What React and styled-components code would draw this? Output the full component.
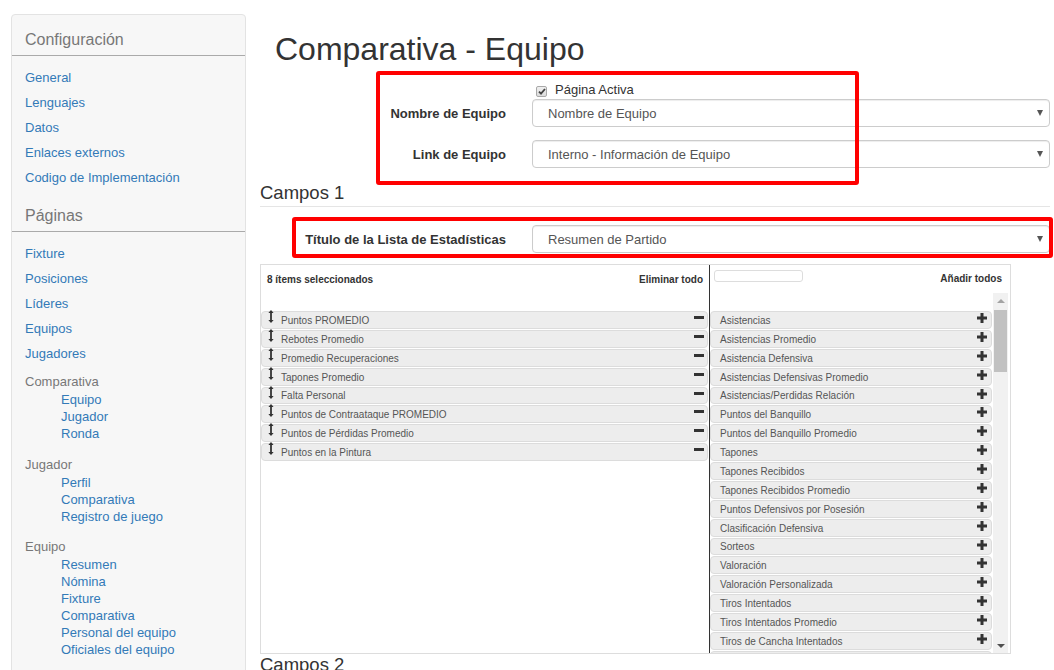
import React from "react";
import styled, { createGlobalStyle } from "styled-components";

const Global = createGlobalStyle`
  html, body { margin: 0; padding: 0; background: #fff; overflow: hidden; }
  body { font-family: "Liberation Sans", Arial, sans-serif; color: #333; }
  * { box-sizing: border-box; }
`;

const Page = styled.div`
  display: grid;
  grid-template-columns: 235px 790px;
  column-gap: 14px;
  padding-left: 11px;
  width: 1054px;
  height: 670px;
  overflow: hidden;
`;

/* ---------- Sidebar ---------- */
const Sidebar = styled.nav`
  margin-top: 14px;
  min-height: 720px;
  background: #f7f7f7;
  border: 1px solid #e3e3e3;
  border-radius: 4px;
`;

const SideHeading = styled.div`
  margin-top: ${(p) => p.$mt}px;
  padding: 1px 13px 5px;
  font-size: 16px;
  line-height: 20px;
  color: #777;
  border-bottom: 1px solid #aaa;
`;

const LinkList = styled.div`
  padding: 9px 13px 0;
`;

const SideLink = styled.a`
  display: block;
  font-size: 13px;
  line-height: 25px;
  color: #337ab7;
  text-decoration: none;
`;

const Group = styled.div`
  margin-top: ${(p) => p.$mt}px;
`;

const GroupTitle = styled.div`
  font-size: 13px;
  line-height: 18px;
  color: #777;
`;

const SubLink = styled.a`
  display: block;
  padding-left: 36px;
  font-size: 13px;
  line-height: 17px;
  color: #337ab7;
  text-decoration: none;
`;

/* ---------- Main ---------- */
const Main = styled.main`
  position: relative;
`;

const Title = styled.h1`
  margin: 0;
  padding: 31px 0 0 15px;
  font-size: 32px;
  line-height: 36px;
  font-weight: 400;
  color: #333;
`;

const FormGrid = styled.div`
  display: grid;
  grid-template-columns: 246px 518px;
  column-gap: 26px;
  align-items: center;
  margin-top: ${(p) => p.$mt || 0}px;
`;

const Label = styled.label`
  text-align: right;
  font-size: 13px;
  font-weight: 700;
  color: #333;
`;

const CheckRow = styled.div`
  grid-column: 2;
  display: flex;
  align-items: center;
  height: 18px;
  padding-left: 4px;
  font-size: 13px;
  color: #333;
`;

const CheckBox = styled.span`
  width: 11px;
  height: 11px;
  margin-top: 4px;
  margin-right: 8px;
  border: 1px solid #a9a9a9;
  border-radius: 2px;
  background: linear-gradient(#f0f0f0, #dcdcdc);
  display: flex;
  align-items: center;
  justify-content: center;
`;

const SelectBox = styled.div`
  height: 28px;
  display: flex;
  align-items: center;
  justify-content: space-between;
  padding: 0 6px 0 15px;
  border: 1px solid #ccc;
  border-radius: 4px;
  background: #fff;
  box-shadow: inset 0 1px 1px rgba(0, 0, 0, 0.075);
  font-size: 13px;
  color: #555;
`;

const Caret = styled.span`
  width: 0;
  height: 0;
  border-left: 3.5px solid transparent;
  border-right: 3.5px solid transparent;
  border-top: 6px solid #555;
`;

const SectionTitle = styled.h3`
  margin: ${(p) => p.$mt}px 0 0;
  padding-bottom: 2px;
  font-size: 18.5px;
  line-height: 22px;
  font-weight: 400;
  color: #333;
  border-bottom: ${(p) => (p.$line ? "1px solid #e5e5e5" : "none")};
`;

const RedBox = styled.div`
  position: absolute;
  border: 4px solid #ff0000;
  border-radius: 3px;
  pointer-events: none;
`;

/* ---------- Multiselect ---------- */
const Multi = styled.div`
  margin-top: 11px;
  width: 751px;
  height: 390px;
  border: 1px solid #ddd;
  display: grid;
  grid-template-columns: 448px 1px 300px;
  grid-template-rows: minmax(0, 1fr);
  overflow: hidden;
  font-size: 10px;
`;

const Divider = styled.div`
  background: #333;
`;

const Panel = styled.div`
  display: flex;
  flex-direction: column;
  min-width: 0;
  min-height: 0;
  overflow: hidden;
`;

const PanelHead = styled.div`
  flex: none;
  height: 28px;
  display: flex;
  align-items: ${(p) => (p.$top ? "flex-start" : "center")};
  justify-content: space-between;
  padding: ${(p) => p.$pad};
  font-weight: 700;
  color: #333;
`;

const Search = styled.input`
  width: 89px;
  height: 12px;
  margin-top: 5px;
  border: 1px solid #ddd;
  border-radius: 3px;
  padding: 0;
  outline: none;
`;

const HeadText = styled.span`
  margin-top: ${(p) => p.$mt || 0}px;
`;

const PanelBody = styled.div`
  flex: 1;
  display: flex;
  min-height: 0;
  overflow: hidden;
`;

const List = styled.div`
  flex: ${(p) => (p.$w ? `0 0 ${p.$w}px` : "1")};
  padding: 18px ${(p) => p.$pr || 0}px 0 0;
  overflow: hidden;
`;

const Row = styled.div`
  height: 17.88px;
  margin-bottom: 1px;
  display: flex;
  align-items: center;
  border: 1px solid #dcdcdc;
  border-radius: 4px;
  background: #ededed;
  padding-left: ${(p) => p.$pl}px;
  color: #555;
  font-size: 10px;
  white-space: nowrap;
`;

const RowText = styled.span`
  flex: 1;
  padding-top: 2px;
  line-height: 16px;
`;

const SortIcon = styled.svg`
  align-self: flex-start;
  margin-top: -2px;
  margin-right: 7px;
  flex: none;
`;

const ActIcon = styled.svg`
  align-self: flex-start;
  margin-top: ${(p) => p.$mt}px;
  margin-right: ${(p) => p.$mr}px;
  flex: none;
`;

const ScrollBar = styled.div`
  flex: 0 0 15px;
  margin-left: 1px;
  background: #f1f1f1;
  display: flex;
  flex-direction: column;
  align-items: center;
`;

const ScrollBtn = styled.div`
  height: 15px;
  width: 15px;
  flex: none;
  display: flex;
  align-items: center;
  justify-content: center;
`;

const Arrow = styled.span`
  width: 0;
  height: 0;
  border-left: 4px solid transparent;
  border-right: 4px solid transparent;
  ${(p) => (p.$up ? "border-bottom: 4px solid #a3a3a3;" : "border-top: 4px solid #505050;")}
`;

const Track = styled.div`
  flex: 1;
  width: 15px;
  padding: 2px 1px 0;
`;

const Thumb = styled.div`
  height: 62px;
  background: #c1c1c1;
`;

const selected = [
  "Puntos PROMEDIO",
  "Rebotes Promedio",
  "Promedio Recuperaciones",
  "Tapones Promedio",
  "Falta Personal",
  "Puntos de Contraataque PROMEDIO",
  "Puntos de Pérdidas Promedio",
  "Puntos en la Pintura",
];

const available = [
  "Asistencias",
  "Asistencias Promedio",
  "Asistencia Defensiva",
  "Asistencias Defensivas Promedio",
  "Asistencias/Perdidas Relación",
  "Puntos del Banquillo",
  "Puntos del Banquillo Promedio",
  "Tapones",
  "Tapones Recibidos",
  "Tapones Recibidos Promedio",
  "Puntos Defensivos por Posesión",
  "Clasificación Defensiva",
  "Sorteos",
  "Valoración",
  "Valoración Personalizada",
  "Tiros Intentados",
  "Tiros Intentados Promedio",
  "Tiros de Cancha Intentados",
  "Tiros de Cancha Intentados Promedio",
  "Tiros de Campo Anotados",
];

const Sort = () => (
  <SortIcon width="6" height="13" viewBox="0 0 6 13">
    <path d="M3 0 L5.6 3 H0.4 Z" fill="#333" />
    <rect x="2.1" y="2" width="1.8" height="9" fill="#333" />
    <path d="M3 13 L5.6 10 H0.4 Z" fill="#333" />
  </SortIcon>
);

const Minus = () => (
  <ActIcon $mt={4} $mr={3} width="10" height="3" viewBox="0 0 10 3">
    <rect x="0" y="0" width="10" height="3" fill="#333" />
  </ActIcon>
);

const Plus = () => (
  <ActIcon $mt={1} $mr={4} width="10" height="10" viewBox="0 0 10 10">
    <rect x="3.5" y="0" width="3" height="10" fill="#333" />
    <rect x="0" y="3.5" width="10" height="3" fill="#333" />
  </ActIcon>
);

export default function App() {
  return (
    <>
      <Global />
      <Page>
        <Sidebar>
          <SideHeading $mt={14}>Configuración</SideHeading>
          <LinkList>
            {["General", "Lenguajes", "Datos", "Enlaces externos", "Codigo de Implementación"].map((l) => (
              <SideLink key={l} href="#">{l}</SideLink>
            ))}
          </LinkList>
          <SideHeading $mt={15}>Páginas</SideHeading>
          <LinkList>
            {["Fixture", "Posiciones", "Líderes", "Equipos", "Jugadores"].map((l) => (
              <SideLink key={l} href="#">{l}</SideLink>
            ))}
            <Group $mt={7}>
              <GroupTitle>Comparativa</GroupTitle>
              {["Equipo", "Jugador", "Ronda"].map((l) => (
                <SubLink key={l} href="#">{l}</SubLink>
              ))}
            </Group>
            <Group $mt={14}>
              <GroupTitle>Jugador</GroupTitle>
              {["Perfil", "Comparativa", "Registro de juego"].map((l) => (
                <SubLink key={l} href="#">{l}</SubLink>
              ))}
            </Group>
            <Group $mt={13}>
              <GroupTitle>Equipo</GroupTitle>
              {["Resumen", "Nómina", "Fixture", "Comparativa", "Personal del equipo", "Oficiales del equipo"].map((l) => (
                <SubLink key={l} href="#">{l}</SubLink>
              ))}
            </Group>
          </LinkList>
        </Sidebar>

        <Main>
          <Title>Comparativa - Equipo</Title>

          <FormGrid $mt={13}>
            <CheckRow>
              <CheckBox>
                <svg width="8" height="7" viewBox="0 0 8 7">
                  <path d="M1 3.6 L3 5.6 L7 1" stroke="#444" strokeWidth="1.8" fill="none" />
                </svg>
              </CheckBox>
              Página Activa
            </CheckRow>
          </FormGrid>
          <FormGrid $mt={1}>
            <Label>Nombre de Equipo</Label>
            <SelectBox>
              Nombre de Equipo
              <Caret />
            </SelectBox>
          </FormGrid>
          <FormGrid $mt={13}>
            <Label>Link de Equipo</Label>
            <SelectBox>
              Interno - Información de Equipo
              <Caret />
            </SelectBox>
          </FormGrid>

          <SectionTitle $mt={14} $line>Campos 1</SectionTitle>

          <FormGrid $mt={18}>
            <Label>Título de la Lista de Estadísticas</Label>
            <SelectBox>
              Resumen de Partido
              <Caret />
            </SelectBox>
          </FormGrid>

          <Multi>
            <Panel>
              <PanelHead $pad="0 6px 0 6px">
                <span>8 ítems seleccionados</span>
                <span>Eliminar todo</span>
              </PanelHead>
              <PanelBody>
                <List $pr={1}>
                  {selected.map((s) => (
                    <Row key={s} $pl={6}>
                      <Sort />
                      <RowText>{s}</RowText>
                      <Minus />
                    </Row>
                  ))}
                </List>
              </PanelBody>
            </Panel>
            <Divider />
            <Panel>
              <PanelHead $top $pad="0 8px 0 4px">
                <Search aria-label="buscar" />
                <HeadText $mt={8}>Añadir todos</HeadText>
              </PanelHead>
              <PanelBody>
                <List $w={282}>
                  {available.map((s) => (
                    <Row key={s} $pl={9}>
                      <RowText>{s}</RowText>
                      <Plus />
                    </Row>
                  ))}
                </List>
                <ScrollBar>
                  <ScrollBtn><Arrow $up /></ScrollBtn>
                  <Track><Thumb /></Track>
                  <ScrollBtn><Arrow /></ScrollBtn>
                </ScrollBar>
              </PanelBody>
            </Panel>
          </Multi>

          <SectionTitle $mt={0}>Campos 2</SectionTitle>

          <RedBox style={{ left: 116, top: 71, width: 483, height: 114 }} />
          <RedBox style={{ left: 32, top: 217, width: 761, height: 41 }} />
        </Main>
      </Page>
    </>
  );
}
